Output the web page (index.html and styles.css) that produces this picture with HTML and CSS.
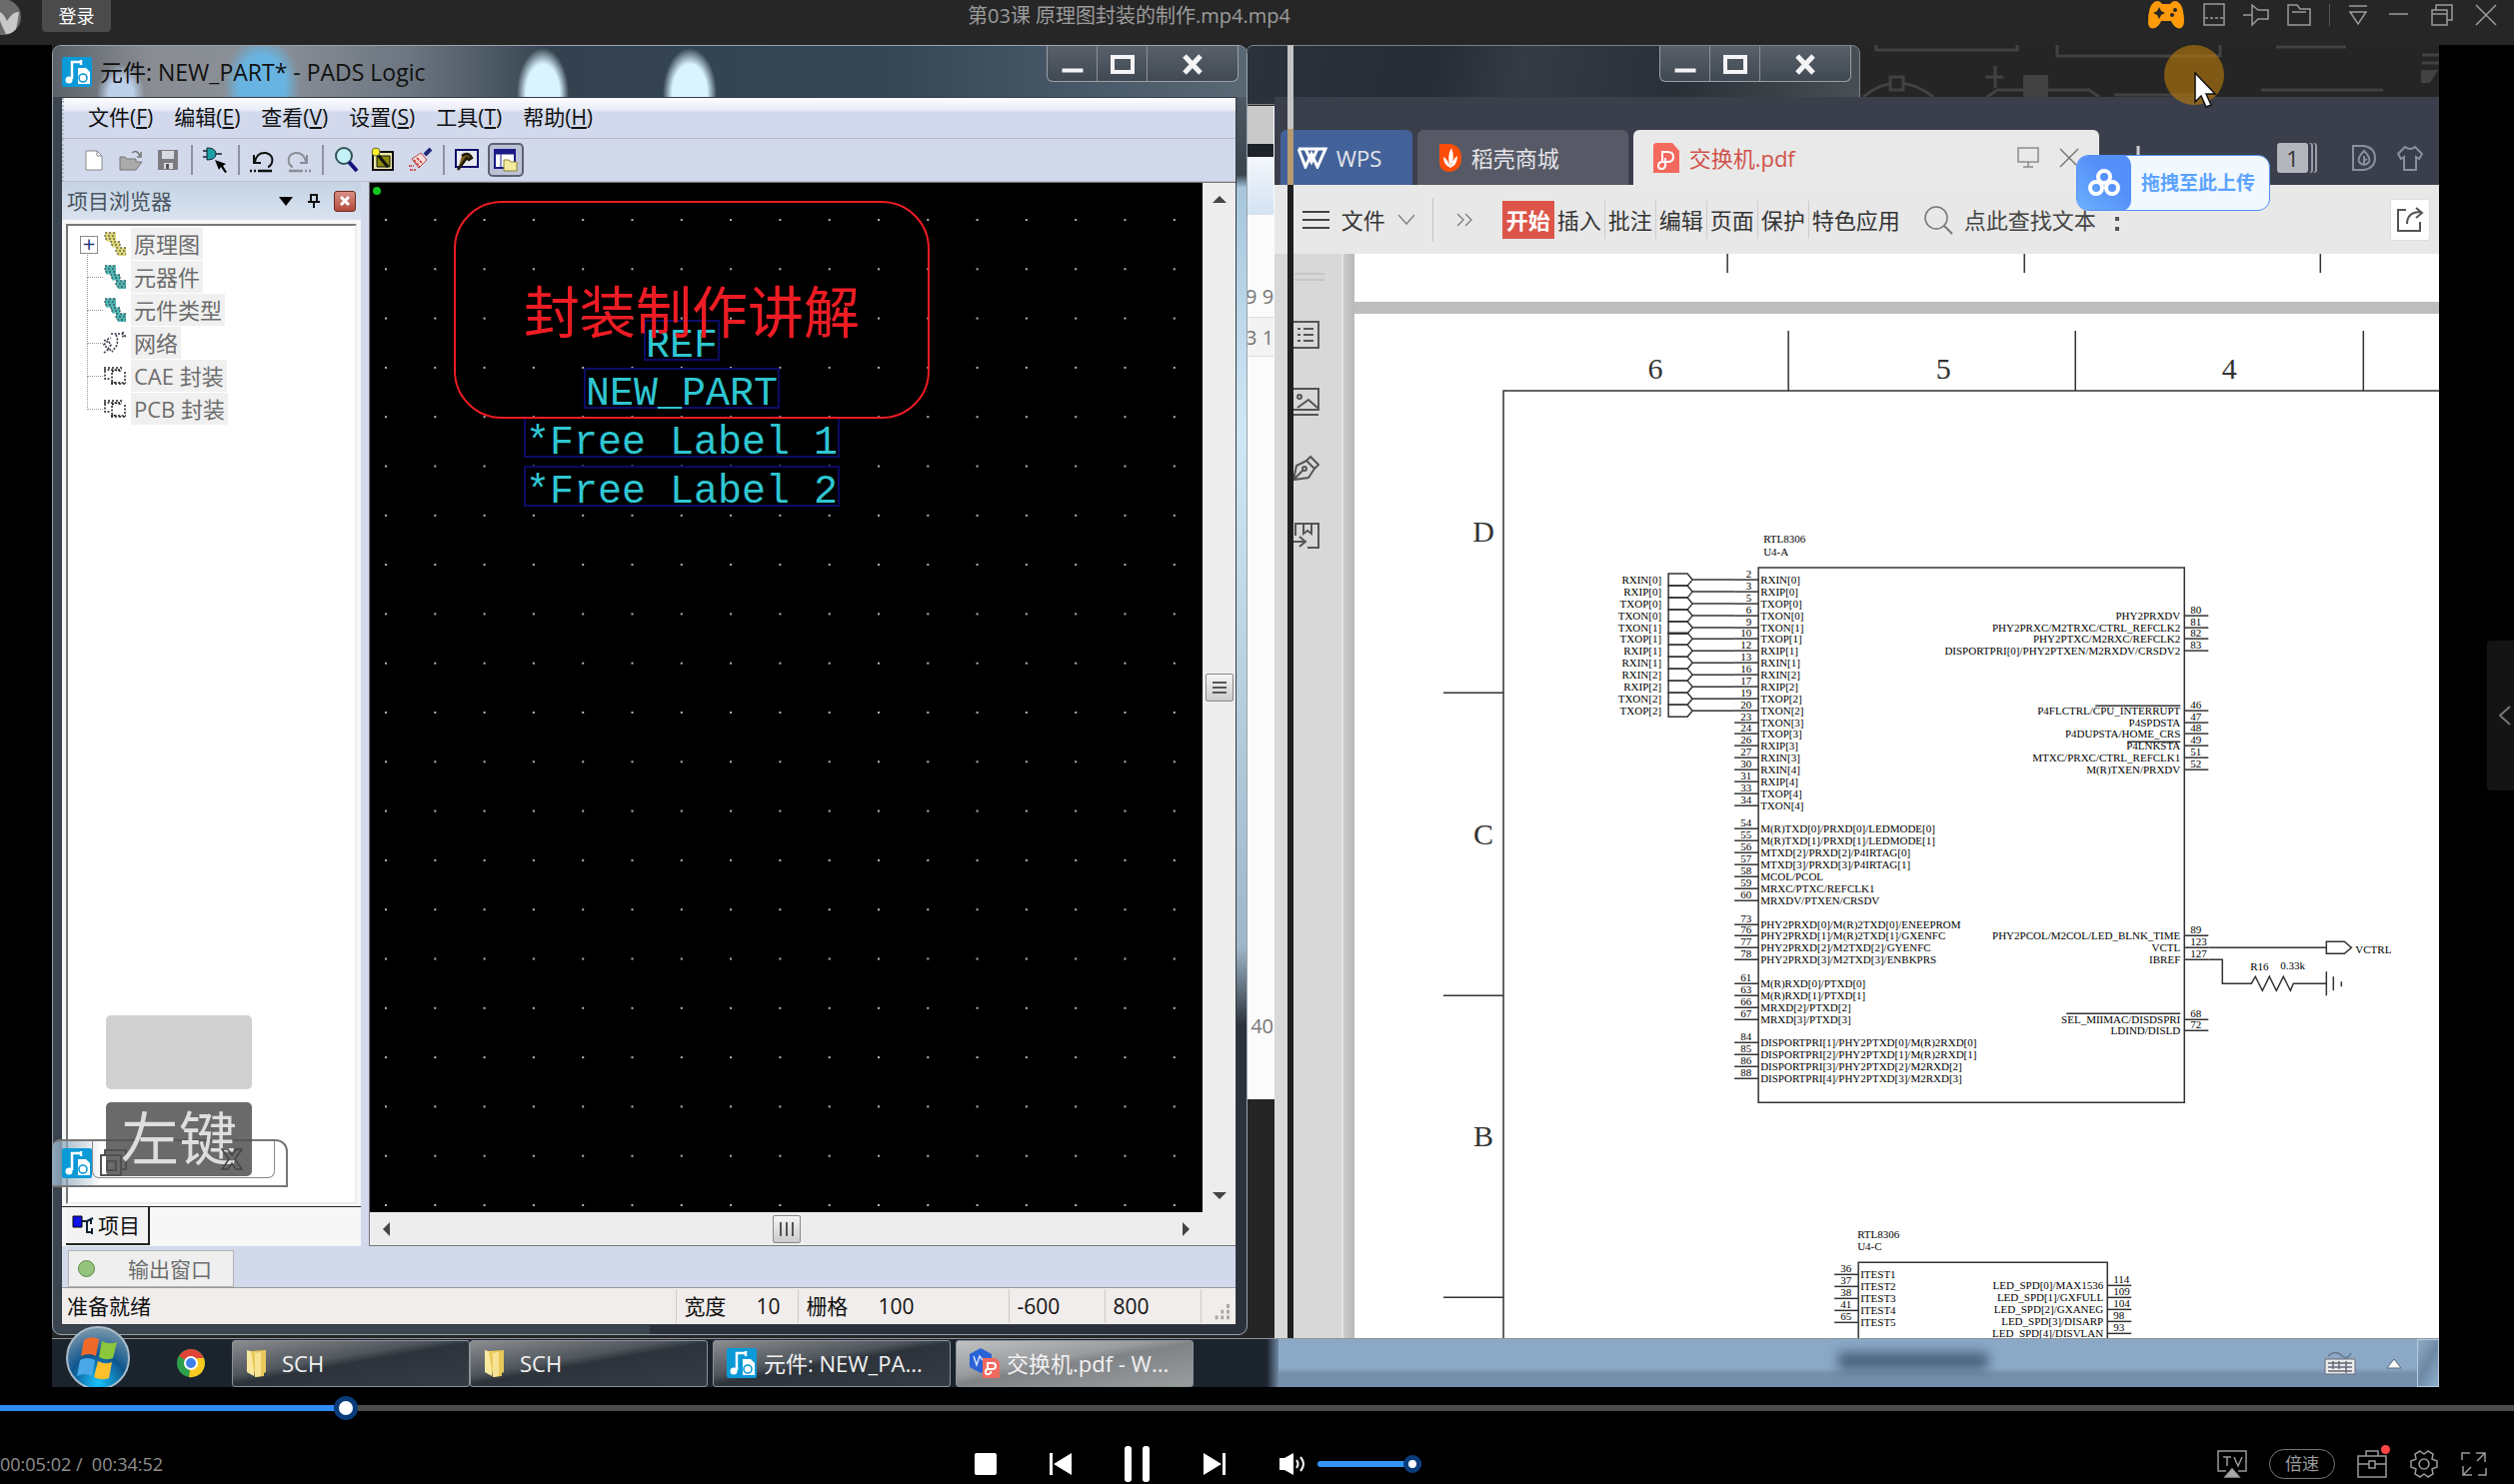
FILE: index.html
```html
<!DOCTYPE html>
<html lang="zh-CN">
<head>
  <meta charset="UTF-8" />
  <meta name="viewport" content="width=device-width, initial-scale=1.0"/>
  <title>第03课 原理图封装的制作.mp4.mp4</title>
  <link rel="stylesheet" href="styles.css">
</head>
<body>
  <!-- Shared icons -->
  <svg class="defs" width="0" height="0" aria-hidden="true">
    <symbol id="pads" viewBox="0 0 30 30">
      <rect width="30" height="30" rx="2" fill="#0b9ad8"/>
      <path d="M10 22V5h9M19 3v5" fill="none" stroke="#fff" stroke-width="2.5"/>
      <circle cx="7" cy="23" r="3.5" fill="#fff"/>
      <path d="M16 11h8l4 4v12H16z" fill="#fff"/>
      <circle cx="21" cy="21" r="4" fill="none" stroke="#0b9ad8" stroke-width="1.6"/>
    </symbol>
    <symbol id="folder" viewBox="0 0 22 30">
      <path d="M1 2l7 2v24l-7-4z" fill="#f9e9a0"/>
      <path d="M5 3l15-1v22l-2 1v3l-9 1z" fill="#e9c95a"/>
      <path d="M9 5l6-1v24l-6 1z" fill="#f7e394"/>
    </symbol>
    <symbol id="parts" viewBox="0 0 24 24">
      <path d="M2 2h11M2 5h11M3 8h10M8 11h9M9 14h8M13 17h10M13 20h10M15 23h8" stroke="currentColor" stroke-width="3"/>
      <path d="M2 1h11M1 4h11M2 7h11M7 10h11M8 13h10M13 16h10M12 19h11M14 22h9" stroke="#333" stroke-width="1" stroke-dasharray="2 2"/>
    </symbol>
    <symbol id="decal" viewBox="0 0 24 24">
      <path d="M2 5V2M6 5V2M10 5V2M14 5V2M18 5V2M1 6h18M2 7v8h5M9 8q5-3 9 0M9 9v8q1 3 4 1M22 8v10M8 19h15M9 19v3M13 19v3M17 19v3M21 19v3" fill="none" stroke="#222" stroke-width="1.5" stroke-dasharray="2 1.5"/>
    </symbol>
    <symbol id="min" viewBox="0 0 24 24"><path d="M1 16h22v5H1z" fill="#f4f4f6" stroke="#444b55"/></symbol>
    <symbol id="max" viewBox="0 0 24 24"><path d="M2 5h20v15H2z" fill="none" stroke="#f4f4f6" stroke-width="4"/></symbol>
    <symbol id="close" viewBox="0 0 24 24"><path d="M4 4l16 17M20 4L4 21" stroke="#f4f4f6" stroke-width="5"/></symbol>
  </svg>

  <!-- Player title bar -->
  <header class="player-bar">
    <svg class="avatar" viewBox="0 0 21 35"><circle cx="3" cy="17" r="18" fill="#6b6b6b"/><path d="M0 12q4 2 7 9 6-10 12-9-1 9-3 17-4 5-10 5Q0 22 0 20z" fill="#c8c8c8"/></svg>
    <button class="login">登录</button>
    <h1>第03课 原理图封装的制作.mp4.mp4</h1>
    <div class="player-tools">
      <button aria-label="游戏"><svg width="38" height="30" viewBox="0 0 38 30"><path d="M7 2Q12-1 15 4h8q3-5 8-2 6 4 6 20-1 8-7 6-4-2-6-7H14q-2 5-6 7-7 2-7-6Q1 6 7 2z" fill="#ff9a0a"/><path d="M12 7l2 4 4 2-4 2-2 4-2-4-4-2 4-2z" fill="#262626"/><circle cx="28" cy="10" r="2" fill="#262626"/><circle cx="25" cy="15" r="2" fill="#262626"/></svg></button>
      <button aria-label="迷你"><svg width="22" height="24" viewBox="0 0 22 24"><path d="M1 1h20v21H1z"/><path d="M2 15h18" stroke-dasharray="3 2"/></svg></button>
      <button aria-label="置顶"><svg width="26" height="24" viewBox="0 0 26 24"><path d="M0 12h9M9 2v20l6-6h10V7H15z"/></svg></button>
      <button aria-label="打开"><svg width="24" height="24" viewBox="0 0 24 24"><path d="M1 2h9l3 4h10v16H1zM5 9h14"/></svg></button>
      <span class="bar-rule"></span>
      <button aria-label="菜单"><svg width="20" height="24" viewBox="0 0 20 24"><path d="M1 3h18M2 9h16l-8 12z"/></svg></button>
      <button class="gap-wide" aria-label="最小化"><svg width="20" height="24" viewBox="0 0 20 24"><path d="M0 11h19"/></svg></button>
      <button class="gap-wide" aria-label="还原"><svg width="24" height="24" viewBox="0 0 24 24"><path d="M2 7h15v15H2zM6 7V2h16v15h-5M2 11h15"/></svg></button>
      <button class="gap-wide" aria-label="关闭"><svg width="22" height="24" viewBox="0 0 22 24"><path d="M1 2l20 20M21 2L1 22"/></svg></button>
    </div>
  </header>

  <main class="stage">
    <div class="desktop">
      <svg class="wallpaper" width="580" height="52" viewBox="0 0 580 52" fill="none" stroke="#424242" stroke-width="3">
        <path d="M17 0v5h141V0M198 0v11h163V0M417 2h70M4 52q34-28 70 0M136 21v22M126 32h18M128 52l10-7h92l10 7M402 45h122M563 10h17M563 18h17M255 50h100"/>
        <path d="M164 30h25v22h-25zM562 25h17l-8 13h-9z" fill="#424242" stroke="none"/><path d="M31 32h13v13H31z" fill="#252525"/>
      </svg>

      <!-- Explorer window lying behind the others -->
      <div class="back-title">
        <div class="win-buttons">
          <button aria-label="最小化"><svg><use href="#min"/></svg></button>
          <button aria-label="最大化"><svg><use href="#max"/></svg></button>
          <button class="wide" aria-label="关闭"><svg><use href="#close"/></svg></button>
        </div>
      </div>
      <div class="back-strip">
        <div class="strip-grey"></div>
        <div class="strip-dark"></div>
        <div class="strip-head"></div>
        <p>9 9</p>
        <p class="alt">3 1</p>
        <p class="low">40</p>
      </div>

      <!-- PADS Logic -->
      <section class="pads">
        <header class="pads-title">
          <svg class="app-icon"><use href="#pads"/></svg>
          <h2>元件: NEW_PART* - PADS Logic</h2>
          <div class="win-buttons">
            <button aria-label="最小化"><svg><use href="#min"/></svg></button>
            <button aria-label="最大化"><svg><use href="#max"/></svg></button>
            <button class="wide" aria-label="关闭"><svg><use href="#close"/></svg></button>
          </div>
        </header>

        <div class="pads-client">
          <nav class="menu">
            <button>文件(<u>F</u>)</button>
            <button>编辑(<u>E</u>)</button>
            <button>查看(<u>V</u>)</button>
            <button>设置(<u>S</u>)</button>
            <button>工具(<u>T</u>)</button>
            <button>帮助(<u>H</u>)</button>
          </nav>

          <div class="toolbar">
            <button aria-label="新建"><svg viewBox="0 0 26 26"><path d="M5 4h11l5 5v14H5z" fill="#fff" stroke="#888"/><path d="M16 4v5h5" fill="none" stroke="#888"/></svg></button>
            <button aria-label="打开"><svg viewBox="0 0 26 26"><path d="M2 22V10h5l2 2h9v3h6l-6 8H2z" fill="#aaa" stroke="#777"/><path d="M14 6q5-4 8 3M23 5v5h-4" fill="none" stroke="#777" stroke-width="1.5"/></svg></button>
            <button aria-label="保存"><svg viewBox="0 0 26 26"><path d="M3 3h20v20H3z" fill="#7c7c80"/><path d="M7 4h12v8H7zM9 16h9v6H9z" fill="#d8dae2"/><path d="M11 17h3v5h-3z" fill="#555"/></svg></button>
            <span class="rule"></span>
            <button aria-label="元件"><svg viewBox="0 0 26 26"><path d="M5 1v12q9 0 9-6T5 1z" fill="#1ca0a6" stroke="#123"/><path d="M1 4h4M1 10h4M14 7h6" stroke="#123" stroke-width="1.6"/><path d="M13 13l11 4-3 2 4 6-2 1-4-6-2 3z"/></svg></button>
            <span class="rule"></span>
            <button aria-label="撤销"><svg viewBox="0 0 26 26"><path d="M5 8v8h7M6 15q2-10 11-9 8 2 6 10-2 4-4 4" fill="none" stroke="#111" stroke-width="2"/><path d="M1 24h22" stroke="#111" stroke-width="2.5" stroke-dasharray="2 2 2 2 14"/></svg></button>
            <button aria-label="重做"><svg viewBox="0 0 26 26"><path d="M21 8v8h-7M20 15Q18 5 9 6 1 8 3 16q2 4 4 4" fill="none" stroke="#8b8f98" stroke-width="2"/><path d="M3 24h22" stroke="#8b8f98" stroke-width="2.5" stroke-dasharray="14 2 2 2 2"/></svg></button>
            <span class="rule"></span>
            <button aria-label="缩放"><svg viewBox="0 0 26 26"><circle cx="11" cy="9" r="8" fill="#c5f2f7" stroke="#355" stroke-width="2"/><path d="M16 15l8 9" stroke="#12127e" stroke-width="4"/></svg></button>
            <button aria-label="板"><svg viewBox="0 0 26 26"><path d="M3 5h20v18H3z" fill="#ece9a8" stroke="#111" stroke-width="2"/><path d="M7 9h13v11H7z" fill="#8b8a0c" stroke="#111"/><path d="M8 8l10 12" stroke="#111" stroke-width="3"/><circle cx="6" cy="5" r="4" fill="#ffee2e" stroke="#663"/></svg></button>
            <button aria-label="刷新"><svg viewBox="0 0 26 26"><path d="M24 2l-6 6" stroke="#23277b" stroke-width="4"/><path d="M5 12l9-6 6 7-8 8z" fill="#f7dcd8" stroke="#b24848"/><path d="M7 13l6 7M10 11l6 6M2 19h5M3 23h6" stroke="#c33" stroke-width="1.5" stroke-dasharray="3 1"/></svg></button>
            <span class="rule"></span>
            <button aria-label="选项"><svg viewBox="0 0 26 26"><path d="M2 3h22v17H2z" fill="#e8eaf2" stroke="#10106c" stroke-width="2"/><path d="M8 9q6-5 10 2l-3 2-2-2-9 12" fill="#7a5c1c" stroke="#221a05" stroke-width="2.5"/></svg></button>
            <button class="pressed" aria-label="项目浏览器"><svg viewBox="0 0 26 26"><path d="M2 3h20v18H2z" fill="#fff" stroke="#1a1a88" stroke-width="2"/><path d="M2 3h20v4H2zM8 7v14" fill="#1a1a88" stroke="#1a1a88"/><path d="M11 13h5l2 2h6v9H11z" fill="#f4ea9e" stroke="#8b8438"/></svg></button>
          </div>

          <div class="pads-body">
            <aside class="browser">
              <header>
                <h3>项目浏览器</h3>
                <button aria-label="菜单"><svg width="16" height="12" viewBox="0 0 16 12"><path d="M1 2h14l-7 9z"/></svg></button>
                <button aria-label="固定"><svg width="12" height="14" viewBox="0 0 12 14"><path d="M3 1h6v7H3zM0 8h12M6 8v6" fill="none" stroke="#111" stroke-width="2"/></svg></button>
                <button class="panel-close" aria-label="关闭"><svg width="10" height="10" viewBox="0 0 10 10"><path d="M1 1l8 8M9 1L1 9" stroke="#fff" stroke-width="3"/></svg></button>
              </header>
              <ul class="tree">
                <li class="root"><svg class="yellow"><use href="#parts"/></svg><span>原理图</span></li>
                <li><svg class="teal"><use href="#parts"/></svg><span>元器件</span></li>
                <li><svg class="teal"><use href="#parts"/></svg><span>元件类型</span></li>
                <li><svg viewBox="0 0 24 24"><path d="M8 3h12l3 3M20 1v6M13 4q3 6 0 12l-4 5M1 10l7-3M1 14l4-4 3 4-3 4zM1 22l5-4 4 3" fill="none" stroke="#334" stroke-width="1.6" stroke-dasharray="2 1.5"/></svg><span>网络</span></li>
                <li><svg><use href="#decal"/></svg><span>CAE 封装</span></li>
                <li><svg><use href="#decal"/></svg><span>PCB 封装</span></li>
              </ul>
              <div class="panel-tabs">
                <button><svg width="24" height="20" viewBox="0 0 24 20"><path d="M1 1h9v11H1z" fill="#1010e8" stroke="#000"/><path d="M10 6h5M15 6v11h4M15 6l6-3M19 3v6M20 13v6" fill="none" stroke="#123" stroke-width="2"/></svg>项目</button>
              </div>
            </aside>

            <div class="work">
              <div class="canvas">
                <svg class="grid-dots">
                  <pattern id="dots" x="15" y="36" width="49.3" height="49.3" patternUnits="userSpaceOnUse"><rect width="2" height="2" fill="#b5b5b5"/></pattern>
                  <rect width="100%" height="100%" fill="url(#dots)"/>
                  <circle cx="7" cy="8" r="4" fill="#10c81e"/>
                </svg>
                <span class="label ref">REF</span>
                <span class="label part">NEW_PART</span>
                <span class="label free1">*Free Label 1</span>
                <span class="label free2">*Free Label 2</span>
                <div class="note">封装制作讲解</div>
              </div>
              <div class="vscroll">
                <svg width="14" height="8" viewBox="0 0 14 8"><path d="M0 8l7-7 7 7z"/></svg>
                <i class="thumb"></i>
                <svg width="14" height="8" viewBox="0 0 14 8"><path d="M0 0l7 7 7-7z"/></svg>
              </div>
              <div class="hscroll">
                <svg width="8" height="14" viewBox="0 0 8 14"><path d="M8 0L1 7l7 7z"/></svg>
                <i class="thumb"></i>
                <svg width="8" height="14" viewBox="0 0 8 14"><path d="M0 0l7 7-7 7z"/></svg>
              </div>
              <div class="corner"></div>
            </div>
          </div>

          <div class="dock"><button><i></i>输出窗口</button></div>
          <footer class="status">
            <span class="ready">准备就绪</span>
            <span class="cell width">宽度<b>10</b></span>
            <span class="cell snap">栅格<b>100</b></span>
            <span class="cell pos">-600</span>
            <span class="cell pos">800</span>
            <svg class="grip cell" viewBox="0 0 35 36"><path d="M26 18h3M20 24h3M26 24h3M14 30h3M20 30h3M26 30h3" stroke="#aaa5a5" stroke-width="4"/></svg>
          </footer>
        </div>
      </section>

      <!-- Key-press overlay and the shrinking window outline -->
      <div class="ghost"><svg class="app-icon"><use href="#pads"/></svg><svg width="28" height="28" viewBox="0 0 28 28" fill="none" stroke="#555" stroke-width="2"><path d="M1 6h20v20H1zM5 6V1h21v19h-5M7 12h9v9H7z"/></svg></div>
      <div class="keys">
        <div class="key faded"></div>
        <div class="key">左键</div>
      </div>
      <svg class="ghost-close" width="24" height="22" viewBox="0 0 24 22"><path d="M2 1h6l4 6 4-6h6l-7 10 7 10h-6l-4-6-4 6H2l7-10z" fill="none" stroke="#444" stroke-width="1.5"/></svg>

      <!-- WPS PDF reader -->
      <section class="wps">
        <nav class="wps-tabs">
          <a href="#" class="tab home"><svg width="30" height="22" viewBox="0 0 30 22"><path d="M1 2h27l-8 18-6-13-6 13L1 2M8 2l6 13 6-13" fill="none" stroke="#fff" stroke-width="3"/></svg>WPS</a>
          <a href="#" class="tab store"><svg width="24" height="30" viewBox="0 0 24 30"><path d="M1 1h11q11 2 11 14T12 29Q1 29 1 19z" fill="#fb4d08"/><path d="M12 25q-7-3-7-11 5 3 7 11zq7-3 7-12-5 3-7 12zq-4-12 1-20 4 9-1 20z" fill="#fff"/></svg>稻壳商城</a>
          <a href="#" class="tab doc"><svg width="26" height="30" viewBox="0 0 26 30"><path d="M2 0h17l7 8v22H0V2z" fill="#f4695d"/><path d="M9 18V9h5q6 0 6 5t-6 5H9q-4 0-4 4 0 3 3 3 4 0 4-4v-7" fill="none" stroke="#fff" stroke-width="2"/></svg>交换机.pdf
            <svg class="present" width="22" height="22" viewBox="0 0 22 22"><path d="M1 1h20v14H1zM11 15v5M6 20h10" fill="none" stroke="#8b8b8b" stroke-width="1.5"/></svg>
            <svg width="20" height="20" viewBox="0 0 20 20"><path d="M1 1l18 18M19 1L1 19" stroke="#777" stroke-width="1.5"/></svg></a>
          <button class="new-tab" aria-label="新标签"><svg width="24" height="24" viewBox="0 0 24 24"><path d="M12 0v24M0 12h24" stroke="#ccc" stroke-width="3"/></svg></button>
          <div class="wps-right">
            <span class="count">1</span>
            <svg width="24" height="26" viewBox="0 0 24 26"><path d="M1 1h11q11 2 11 12T12 25H1zM12 6q-7 7-5 11 5 6 10 0 2-4-5-11zM12 11v9M12 16l3-2" fill="none" stroke="#8b8f9c" stroke-width="2"/></svg>
            <svg width="26" height="26" viewBox="0 0 26 26"><path d="M8 2q5 4 10 0l7 7-3 5-3-2v13H7V12l-3 2-3-5z" fill="none" stroke="#8b8f9c" stroke-width="2"/></svg>
          </div>
        </nav>

        <div class="ribbon">
          <button class="file"><svg width="27" height="20" viewBox="0 0 27 20"><path d="M0 2h27M0 10h27M0 18h27" stroke="#444" stroke-width="2"/></svg>文件<svg width="18" height="12" viewBox="0 0 18 12"><path d="M1 1l8 9 8-9" fill="none" stroke="#888" stroke-width="1.5"/></svg></button>
          <button class="more" aria-label="更多"><svg width="17" height="14" viewBox="0 0 17 14"><path d="M1 1l6 6-6 6M9 1l6 6-6 6" fill="none" stroke="#888" stroke-width="1.5"/></svg></button>
          <div class="ribbon-tabs">
            <button class="on">开始</button><button>插入</button><button>批注</button><button>编辑</button><button>页面</button><button>保护</button><button>特色应用</button>
          </div>
          <label class="find"><svg width="30" height="30" viewBox="0 0 30 30"><circle cx="13" cy="13" r="11" fill="none" stroke="#777" stroke-width="1.5"/><path d="M21 21l8 8" stroke="#777" stroke-width="2"/></svg><input type="text" aria-label="查找" placeholder="点此查找文本"></label>
          <svg width="6" height="26" viewBox="0 0 6 26"><path d="M1 2h4M1 12h4M1 22h4" stroke="#555" stroke-width="4"/></svg>
          <button class="share" aria-label="分享"><svg width="28" height="26" viewBox="0 0 28 26"><path d="M10 3H2v21h22v-9M11 17q0-12 14-12M20 1l6 5-6 5" fill="none" stroke="#555" stroke-width="2"/></svg></button>
        </div>

        <div class="reader">
          <aside class="side">
            <svg class="handle" width="30" height="10" viewBox="0 0 30 10"><path d="M0 2h30M0 8h30" stroke="#b5b5b5"/></svg>
            <button aria-label="目录"><svg viewBox="0 0 28 28"><path d="M1 1h26v26H1zM6 8h3M12 8h10M6 14h3M12 14h10M6 20h3M12 20h10"/></svg></button>
            <button aria-label="图片"><svg viewBox="0 0 28 28"><path d="M1 1h26v21H1zM6 20l11-8 9 8M1 27h26"/><circle cx="8" cy="9" r="2"/></svg></button>
            <button aria-label="签名"><svg viewBox="0 0 28 28"><path d="M2 25l3-14 10-5 8 8-6 9zM2 25l10-10M15 6l4-4 8 8-4 4"/><circle cx="13" cy="14" r="2"/></svg></button>
            <button aria-label="导出"><svg viewBox="0 0 28 28"><path d="M4 14V2h23v24H16M1 20h12M8 15l6 5-6 5M12 2v10l4-3 4 3V2"/></svg></button>
          </aside>
          <svg class="page" id="page" viewBox="0 0 1085 1085" preserveAspectRatio="xMinYMin slice">
            <rect class="gap" y="48" width="1400" height="12"/>
            <path class="frame" d="M373 0v19M670 0v19M966 0v19M149 1200V137h1300M434 77v60M721 77v60M1009 77v60M89 439h60M89 742h60M89 1044h60"/>
            <g class="zone">
              <text x="301" y="125">6</text><text x="589" y="125">5</text><text x="875" y="125">4</text>
              <text x="129" y="288">D</text><text x="129" y="591">C</text><text x="129" y="893">B</text>
            </g>
          </svg>
        </div>
      </section>
      <div class="split-line"></div>

      <footer class="taskbar">
        <button class="start" aria-label="开始"><svg width="66" height="66" viewBox="0 0 66 66">
          <defs><radialGradient id="orb" cx=".5" cy=".9" r=".9"><stop offset="0" stop-color="#18c4ff"/><stop offset=".5" stop-color="#0f568f"/><stop offset="1" stop-color="#7d99ab"/></radialGradient></defs>
          <circle cx="33" cy="33" r="31" fill="url(#orb)" stroke="#a8bccb" stroke-width="2"/>
          <path d="M19 15q7-5 15-1l-3 17q-7-4-15 0z" fill="#ef6a2a"/><path d="M37 16q7 4 15 1l-4 16q-7 3-14-1z" fill="#8cc63c"/>
          <path d="M15 35q7-4 15 0l-3 16q-7-4-15 0z" fill="#4aa8e8"/><path d="M33 36q7 4 14 1l-3 16q-8 3-15-1z" fill="#fcc02c"/>
        </svg></button>
        <button class="chrome" aria-label="Chrome"><svg width="30" height="30" viewBox="0 0 30 30"><circle cx="15" cy="15" r="14" fill="#2da04c"/><path d="M15 15L3 8Q8 1 15 1t12 7l1 3H15z" fill="#e04436"/><path d="M15 15l6-5h7q3 9-4 16-5 4-11 3z" fill="#fbc91f"/><circle cx="15" cy="15" r="7" fill="#fff"/><circle cx="15" cy="15" r="5" fill="#3f7fea"/></svg></button>
        <button class="task joined"><svg class="dir"><use href="#folder"/></svg>SCH</button>
        <button class="task"><svg class="dir"><use href="#folder"/></svg>SCH</button>
        <button class="task app"><svg class="app-icon"><use href="#pads"/></svg>元件: NEW_PA...</button>
        <button class="task app active"><svg class="app-icon" viewBox="0 0 30 30"><path d="M11 0l11 6v13l-11 6L0 19V6z" fill="#2b62d8"/><path d="M4 8l3 9 3-9 3 4" fill="none" stroke="#cfe0ff" stroke-width="1.5"/><path d="M13 10h13l4 4v16H13z" fill="#f0695f"/><path d="M18 21v-6h5q3 0 3 3t-3 3h-5q-2 0-2 3t3 2 2-3" fill="none" stroke="#fff" stroke-width="2"/></svg>交换机.pdf - W...</button>
        <div class="tray">
          <span class="smudge"></span>
          <svg width="32" height="24" viewBox="0 0 32 24"><path d="M4 5q8-7 14 0 6 4 9-3" fill="none" stroke="#667888" stroke-width="1.5"/><path d="M1 8h30v15H1z" fill="#e8eaec" stroke="#667"/><path d="M4 12h24M4 16h24M4 20h24M9 10v8M15 10v8M22 10v12" stroke="#667" stroke-width="1.5"/></svg>
          <svg width="16" height="12" viewBox="0 0 16 12"><path d="M1 11l7-9 7 9z" fill="#fff" stroke="#567"/></svg>
          <i class="peek"></i>
        </div>
      </footer>

      <div class="spot"></div>
      <svg class="pointer" width="24" height="36" viewBox="0 0 24 36"><path d="M1 1v29l6-6 5 11 5-2-5-11h9z" fill="#fff" stroke="#111" stroke-width="1.5"/></svg>
      <button class="upload"><span><svg width="32" height="28" viewBox="0 0 32 28" fill="none" stroke="#fff" stroke-width="4"><circle cx="16" cy="8" r="6"/><circle cx="8" cy="19" r="6"/><circle cx="24" cy="19" r="6"/></svg></span>拖拽至此上传</button>
    </div>
    <button class="drawer" aria-label="列表"><svg width="12" height="20" viewBox="0 0 12 20"><path d="M11 1L1 10l10 9" fill="none" stroke="#777" stroke-width="2"/></svg></button>
  </main>

  <!-- Player controls -->
  <footer class="controls">
    <input class="seek" type="range" min="0" max="1000" value="134" aria-label="进度">
    <div class="control-row">
      <div class="time">00:05:02 /&nbsp; 00:34:52</div>
      <div class="play">
        <button aria-label="停止"><svg width="22" height="22" viewBox="0 0 22 22"><rect width="22" height="22" rx="2"/></svg></button>
        <button aria-label="上一个"><svg width="22" height="22" viewBox="0 0 22 22"><path d="M0 0h3v22H0zM22 0v22L4 11z"/></svg></button>
        <button aria-label="暂停"><svg width="26" height="36" viewBox="0 0 26 36"><rect width="7" height="36" rx="3"/><rect x="18" width="7" height="36" rx="3"/></svg></button>
        <button aria-label="下一个"><svg width="22" height="22" viewBox="0 0 22 22"><path d="M19 0h3v22h-3zM0 0v22l18-11z"/></svg></button>
        <button aria-label="音量"><svg width="28" height="22" viewBox="0 0 28 22"><path d="M1 5h5l9-5v22l-9-5H1z"/><path d="M18 7q3 4 0 8M22 4q6 7 0 14" fill="none" stroke="#fff" stroke-width="2"/></svg></button>
        <input class="volume" type="range" min="0" max="100" value="100" aria-label="音量">
      </div>
      <div class="extras">
        <button aria-label="投屏"><svg width="30" height="28" viewBox="0 0 30 28"><path d="M9 21H1V1h28v20h-8M6 7h8M10 7v9M17 7l4 9 4-9"/><path d="M8 27l7-8 7 8z" fill="#aaa"/></svg></button>
        <button class="speed">倍速</button>
        <button class="box" aria-label="工具箱"><svg width="30" height="28" viewBox="0 0 30 28"><path d="M1 6h28v21H1zM9 6V1h12v5M1 14h11M18 14h11M12 11h6v7h-6z"/></svg></button>
        <button aria-label="设置"><svg width="30" height="28" viewBox="0 0 30 28"><path d="M11 1l4 3 4-3 5 3-1 5 5 2v6l-5 2 1 5-5 3-4-3-4 3-5-3 1-5-5-2v-6l5-2-1-5z"/><circle cx="15" cy="14" r="5"/></svg></button>
        <button aria-label="全屏"><svg width="26" height="26" viewBox="0 0 26 26"><path d="M1 9V2h8M25 17v7h-8M15 2h9v9M24 2l-8 8M11 24H2v-9M2 24l8-8"/></svg></button>
      </div>
    </div>
  </footer>

  <script src="script.js"></script>
</body>
</html>
```
FILE: styles.css
```css
* {
  box-sizing: border-box;
}

body {
  margin: 0;
  height: 100vh;
  display: flex;
  flex-direction: column;
  overflow: hidden;
  background: #000;
  color: #111;
  font-family: "Open Sans", "Noto Sans CJK SC", sans-serif;
  font-size: 21px;
  line-height: 28px;
}

button {
  margin: 0;
  padding: 0;
  border: 0;
  background: none;
  color: inherit;
  font: inherit;
  display: flex;
  align-items: center;
  white-space: nowrap;
  cursor: pointer;
}

a {
  color: inherit;
  text-decoration: none;
}

h1, h2, h3, p, ul {
  margin: 0;
  padding: 0;
  font-weight: normal;
  font-size: inherit;
  list-style: none;
}

svg {
  flex: none;
}

.defs {
  position: absolute;
}

.app-icon {
  width: 30px;
  height: 30px;
}

/* player title bar */
.player-bar {
  flex: none;
  height: 45px;
  display: grid;
  grid-template-columns: 1fr auto 1fr;
  grid-template-areas: "left title tools";
  align-items: start;
  background: #262626;
  color: #9b9b9b;
  font-size: 18px;
}

.avatar {
  grid-area: left;
  width: 21px;
  height: 35px;
}

.login {
  grid-area: left;
  margin-left: 42px;
  justify-self: start;
  width: 69px;
  height: 32px;
  justify-content: center;
  border-radius: 0 0 4px 4px;
  background: #4b4b4b;
  color: #fff;
}

.player-bar h1 {
  grid-area: title;
  margin-right: 256px;
  font-size: 20px;
  line-height: 32px;
}

.player-tools {
  grid-area: tools;
  justify-self: end;
  height: 30px;
  padding-right: 17px;
  display: flex;
  align-items: center;
  gap: 18px;
}

.player-tools svg {
  fill: none;
  stroke: #9b9b9b;
  stroke-width: 1.5;
}

.player-tools button:first-child svg {
  stroke: none;
}

.player-tools .gap-wide {
  margin-left: 3px;
}

.bar-rule {
  width: 1px;
  height: 22px;
  background: #555;
}

/* recorded desktop */
.stage {
  flex: 1;
  min-height: 0;
  position: relative;
  display: flex;
  padding: 0 75px 0 52px;
}

.desktop {
  flex: 1;
  position: relative;
  overflow: hidden;
  display: flex;
  flex-direction: column;
  justify-content: flex-end;
  background: #252525;
}

.wallpaper {
  position: absolute;
  top: 0;
  right: 0;
}

.back-title {
  position: absolute;
  top: 0;
  left: 50%;
  width: 615px;
  height: 60px;
  border: 1px solid #7b8289;
  border-radius: 8px 8px 0 0;
  background: linear-gradient(100deg, #2a323c, #262c34 30%, #353b43 45%, #2a3037 70%, #4a4f56);
}

.back-strip {
  position: absolute;
  top: 61px;
  left: 50%;
  width: 30px;
  height: 994px;
  padding-right: 2px;
  background: #fbfbfb;
  color: #777;
  font-size: 20px;
}

.strip-grey {
  height: 38px;
  background: #c9c9c9;
}

.strip-dark {
  height: 13px;
  background: #1e2329;
}

.strip-head {
  height: 58px;
  margin-bottom: 62px;
  background: linear-gradient(#f3f7fb, #d3e2f3);
}

.back-strip p {
  height: 40px;
  line-height: 40px;
  white-space: nowrap;
  text-align: right;
}

.back-strip .alt {
  border: solid #ddd;
  border-width: 1px 0;
  background: #f3f3f3;
}

.back-strip .low {
  margin-top: 650px;
}

.win-buttons {
  position: absolute;
  top: 0;
  right: 8px;
  display: flex;
  height: 36px;
  border: 1px solid #9aa0a7;
  border-top: 0;
  border-radius: 0 0 6px 6px;
  background: linear-gradient(#59606a, #404953);
}

.win-buttons button {
  width: 50px;
  justify-content: center;
  border-right: 1px solid #8a9098;
}

.win-buttons .wide {
  width: 90px;
  border: 0;
}

.win-buttons svg {
  width: 24px;
  height: 24px;
}

/* PADS Logic */
.pads {
  position: absolute;
  top: 0;
  bottom: 52px;
  left: 0;
  width: 50.1%;
  padding: 0 10px 9px 8px;
  display: flex;
  flex-direction: column;
  border: 1px solid #9aa4ae;
  border-radius: 9px;
  background:
    linear-gradient(90deg, #39444f 50%, transparent 50%),
    linear-gradient(#5b6672, #39444f 10%, #a7c6dc 11%, #cfe8f6 30%, #9fb6c8 70%, #2c333d 76%, #2b313b);
}

.pads-title {
  flex: none;
  height: 51px;
  margin: 0 -10px 0 -8px;
  padding: 0 9px;
  display: flex;
  align-items: center;
  gap: 8px;
  position: relative;
  border-radius: 8px 8px 0 0;
  background:
    radial-gradient(ellipse 26px 46px at 490px 48px, #d9f4ff 65%, transparent),
    radial-gradient(ellipse 27px 46px at 637px 48px, #d9f4ff 65%, transparent),
    radial-gradient(ellipse 38px 50px at 209px 40px, #67b4e2 60%, transparent),
    radial-gradient(ellipse 24px 30px at 68px 48px, #bcd0ea 50%, transparent),
    linear-gradient(90deg, #5c6269, #898d93 8%, #8b9098 18%, #6b7580 30%, #34424f 42%, #354656 70%, #5a6875);
}

.pads-title h2 {
  font-size: 23px;
}

.pads-client {
  flex: 1;
  min-height: 0;
  display: flex;
  flex-direction: column;
  border: 1px solid #333b45;
  background: #d2d9eb;
}

.menu {
  flex: none;
  height: 41px;
  padding: 0 0 3px 24px;
  display: flex;
  gap: 21px;
  border-bottom: 1px solid #b4bacb;
  background: linear-gradient(#fdfdff, #e9ecf7 30%, #d2d9ec 36%);
}

.menu, .toolbar {
  border-left: 2px dotted #b0b6c6;
}

.toolbar {
  flex: none;
  height: 43px;
  padding-left: 14px;
  display: flex;
  align-items: center;
  gap: 5px;
  border-bottom: 1px solid #b9bfce;
}

.toolbar button {
  width: 32px;
  height: 34px;
  justify-content: center;
}

.toolbar svg {
  width: 26px;
  height: 26px;
}

.toolbar .rule {
  width: 2px;
  height: 30px;
  margin: 0 1px 0 2px;
  background: #8d93a3;
}

.toolbar .pressed {
  width: 36px;
  border: 2px solid #5d6272;
  border-radius: 5px;
  background: #bcc2d6;
}

.pads-body {
  flex: 1;
  min-height: 0;
  display: flex;
  gap: 8px;
}

.browser {
  width: 299px;
  display: flex;
  flex-direction: column;
  background: #f7f7f8;
}

.browser header {
  height: 38px;
  padding: 0 5px;
  display: flex;
  align-items: center;
  gap: 14px;
  background: linear-gradient(#c5d3e4, #d9e3ef);
  color: #4b5563;
}

.browser h3 {
  margin-right: auto;
}

.panel-close {
  width: 22px;
  height: 21px;
  justify-content: center;
  border: 1px solid #6b2a20;
  border-radius: 3px;
  background: linear-gradient(#d98f85, #b14a3c);
}

.tree {
  flex: 1;
  margin: 4px 4px 0;
  padding: 1px 0 0 19px;
  border: 2px solid #777;
  border-color: #777 #eee #eee #777;
  background: #fff;
  color: #6d6d6d;
  font-size: 22px;
}

.tree li {
  height: 33px;
  display: flex;
  align-items: center;
  position: relative;
  padding-left: 16px;
}

.tree li::before {
  content: "";
  position: absolute;
  left: 0;
  top: -16px;
  width: 15px;
  height: 33px;
  border: 1px dotted #999;
  border-width: 0 0 1px 1px;
}

.tree .root::before {
  content: "+";
  left: -7px;
  top: 9px;
  width: 16px;
  height: 16px;
  border: 1px solid #8a8a8a;
  background: #fff;
  color: #22387c;
  line-height: 13px;
  text-align: center;
  z-index: 1;
}

.tree svg {
  width: 24px;
  height: 24px;
}

.tree span {
  margin-left: 4px;
  padding: 0 3px;
  line-height: 32px;
  background: #f0f0f0;
}

.yellow {
  color: #ded878;
}

.teal {
  color: #4fb6b6;
}

.panel-tabs {
  height: 40px;
  margin-top: 2px;
  border-top: 1px solid #222;
}

.panel-tabs button {
  width: 84px;
  height: 38px;
  margin-left: 4px;
  padding-left: 6px;
  gap: 2px;
  border: solid #222;
  border-width: 0 2px 2px 0;
  background: #f3f3f3;
}

.work {
  flex: 1;
  display: grid;
  grid-template: 1fr 33px / 1fr 33px;
  border: 1px solid #777;
  border-right: 0;
  background: #ededee;
}

.canvas {
  position: relative;
  overflow: hidden;
  background: #000;
}

.grid-dots {
  display: block;
  width: 100%;
  height: 100%;
}

.label {
  position: absolute;
  height: 41px;
  border: 2px solid #0c0c66;
  color: #2fc6d2;
  font-family: "Liberation Mono", monospace;
  font-size: 40px;
  line-height: 50px;
  white-space: pre;
}

.ref {
  left: 274px;
  top: 137px;
}

.part {
  left: 214px;
  top: 185px;
}

.free1 {
  left: 154px;
  top: 234px;
}

.free2 {
  left: 154px;
  top: 283px;
}

.note {
  position: absolute;
  left: 84px;
  top: 18px;
  width: 476px;
  height: 218px;
  border: 2px solid #ed1c24;
  border-radius: 48px;
  color: #ed1c24;
  font-size: 56px;
  line-height: 216px;
  text-align: center;
}

.vscroll, .hscroll {
  display: flex;
  align-items: center;
  justify-content: space-between;
  fill: #444;
}

.vscroll {
  flex-direction: column;
  padding: 12px 0;
}

.hscroll {
  padding: 0 12px;
}

.thumb {
  width: 28px;
  height: 28px;
  border: 1px solid #8a8a8a;
  border-radius: 2px;
  background: repeating-linear-gradient(90deg, #555 0 2px, transparent 2px 6px) center / 14px 14px no-repeat, linear-gradient(#f5f5f5, #ccc);
}

.vscroll .thumb {
  margin-bottom: 20px;
  background: repeating-linear-gradient(#555 0 2px, transparent 2px 5px) center / 14px 12px no-repeat, linear-gradient(#f5f5f5, #ccc);
}

.dock {
  flex: none;
  height: 41px;
  padding: 4px 6px 0;
}

.dock button {
  width: 166px;
  height: 37px;
  padding-left: 9px;
  gap: 33px;
  border: 1px solid #b3b3b3;
  background: #efefef;
  color: #6d6d6d;
}

.dock i {
  width: 17px;
  height: 17px;
  border: 1px solid #5d8a48;
  border-radius: 50%;
  background: #95c47d;
}

.status {
  flex: none;
  height: 37px;
  display: flex;
  align-items: center;
  border-top: 1px solid #999;
  background: #f1edec;
}

.ready {
  margin-right: auto;
  padding-left: 5px;
}

.cell {
  height: 34px;
  padding-left: 7px;
  line-height: 34px;
  border-left: 1px solid #d0cccb;
}

.status b {
  margin-left: 30px;
  font-weight: normal;
}

.width {
  width: 122px;
}

.snap {
  width: 211px;
}

.pos {
  width: 96px;
}

.grip {
  width: 35px;
  padding: 0;
}

/* key overlay */
.keys {
  position: absolute;
  left: 54px;
  bottom: 211px;
  display: grid;
  gap: 13px;
}

.key {
  width: 146px;
  height: 74px;
  border-radius: 5px;
  background: rgba(80, 80, 80, 0.85);
  color: #dedede;
  font-size: 58px;
  line-height: 72px;
  text-align: center;
}

.faded {
  background: #d0d0d0;
}

.ghost {
  position: absolute;
  left: 0;
  bottom: 200px;
  width: 236px;
  height: 48px;
  padding-left: 10px;
  display: flex;
  align-items: center;
  gap: 8px;
  border: 2px solid #777;
  border-left: 0;
  border-radius: 8px 12px 0 0;
  background: linear-gradient(90deg, #8fa9bd, rgba(255, 255, 255, 0) 50px);
}

.ghost::after {
  content: "";
  flex: 1;
  align-self: start;
  height: 36px;
  margin: 0 11px 0 -44px;
  border: 1px solid #888;
  border-top: 0;
  border-radius: 0 0 7px 7px;
}

.ghost-close {
  position: absolute;
  left: 168px;
  bottom: 217px;
}

/* WPS */
.wps {
  position: absolute;
  top: 52px;
  right: 0;
  bottom: 49px;
  left: 51.2%;
  display: flex;
  flex-direction: column;
  background: #e8e8e8;
}

.wps-tabs {
  flex: none;
  height: 88px;
  padding: 33px 16px 0 6px;
  display: flex;
  gap: 5px;
  background: #3b3f4c;
  color: #e4e4e8;
  font-size: 22px;
}

.tab {
  display: flex;
  align-items: center;
  border-radius: 6px 6px 0 0;
}

.home {
  width: 132px;
  padding-left: 17px;
  gap: 9px;
  background: #43629a;
}

.store {
  width: 211px;
  padding-left: 21px;
  gap: 9px;
  background: #575a66;
}

.doc {
  width: 466px;
  padding: 0 20px;
  gap: 10px;
  background: #e9e9e9;
  color: #d0524a;
}

.present {
  margin: 0 10px 0 auto;
}

.new-tab {
  margin-left: 22px;
}

.wps-right {
  margin-left: auto;
  display: flex;
  align-items: center;
  gap: 21px;
}

.count {
  width: 31px;
  height: 30px;
  margin-right: 23px;
  border-radius: 3px;
  background: #b4b6bd;
  box-shadow: 3px 0 #3b3f4c, 5px 0 #9a9da6, 7px 0 #3b3f4c, 9px 0 #9a9da6;
  color: #333;
  line-height: 30px;
  text-align: center;
}

.ribbon {
  flex: none;
  height: 69px;
  padding: 0 9px 0 28px;
  display: flex;
  align-items: center;
  color: #333;
  font-size: 22px;
}

.file {
  height: 44px;
  gap: 12px;
  padding-right: 17px;
  border-right: 1px solid #c4c4c4;
}

.more {
  margin: 0 29px 0 23px;
}

.ribbon-tabs {
  display: flex;
}

.ribbon-tabs button {
  height: 38px;
  padding: 0 3px;
  border-left: 1px solid #ccc;
}

.ribbon-tabs .on {
  padding: 0 4px;
  border: 0;
  background: #dc5548;
  color: #fff;
  font-weight: bold;
}

.ribbon-tabs .on + button {
  border: 0;
}

.find {
  margin-left: 20px;
  display: flex;
  align-items: center;
  gap: 11px;
}

.find input {
  width: 150px;
  padding: 0;
  border: 0;
  background: none;
  font: inherit;
}

.find input::placeholder {
  color: #444;
}

.share {
  width: 40px;
  height: 42px;
  margin-left: auto;
  justify-content: center;
  border: 1px solid #ddd;
  border-radius: 3px;
  background: #fff;
}

.reader {
  flex: 1;
  min-height: 0;
  display: flex;
  background: #d7d7d7;
}

.side {
  width: 80px;
  padding: 18px 0 0 17px;
  display: flex;
  flex-direction: column;
  gap: 39px;
  background: linear-gradient(90deg, #d8d8d8 67px, #e4e4e4 67px 69px, #ccc 69px, #b8b8b8);
}

.side .handle {
  margin-left: 3px;
}

.side button svg {
  width: 28px;
  height: 28px;
  fill: none;
  stroke: #555;
  stroke-width: 2;
}

.side button {
  height: 28px;
}

.page {
  flex: 1;
  min-width: 0;
  height: 100%;
  background: #fff;
  font-family: "Liberation Serif", serif;
  font-size: 11px;
}

.gap {
  fill: #bdbdbd;
}

.frame, .wire {
  fill: none;
  stroke: #333;
  stroke-width: 1.5;
}

.zone {
  fill: #333;
  font-size: 30px;
  text-anchor: middle;
}

.end {
  text-anchor: end;
}

.split-line {
  position: absolute;
  top: 0;
  bottom: 49px;
  left: 51.76%;
  width: 6px;
  background: linear-gradient(#c4c4c4 84px, #b89a70 84px 140px, #1c1e20 140px);
}

/* taskbar */
.taskbar {
  height: 49px;
  display: flex;
  align-items: center;
  position: relative;
  border-top: 1px solid #8d949c;
  background: linear-gradient(90deg, #1b232d 1215px, #7690ab 1228px);
  color: #f2f2f2;
  font-size: 22px;
}

.start {
  width: 66px;
  height: 66px;
  margin: -10px 0 0 13px;
}

.chrome {
  margin: 0 26px 0 45px;
}

.task {
  width: 238px;
  height: 47px;
  padding-left: 13px;
  gap: 14px;
  border: 1px solid #8b9197;
  border-radius: 3px;
  margin-right: 5px;
  background: linear-gradient(170deg, #8a8d90, #50565c 40%, #2c333b 50%, #353c44);
}

.joined {
  margin-right: 0;
}

.app {
  gap: 7px;
}

.active {
  background: linear-gradient(170deg, #bfc1c3, #999b9d 40%, #808386 50%, #9a9d9f);
}

.dir {
  width: 22px;
  height: 30px;
}

.tray {
  flex: 1;
  align-self: stretch;
  margin-left: 80px;
  display: flex;
  align-items: center;
  gap: 30px;
  background: linear-gradient(#8ba9c7 60%, #7690ab 72%);
}

.smudge {
  width: 150px;
  height: 18px;
  margin: -4px auto 0 560px;
  background: #4a647f;
  filter: blur(6px);
}

.peek {
  width: 22px;
  height: 48px;
  margin-left: -15px;
  border: 1px solid #b5cbe0;
  background: linear-gradient(120deg, #93abc4, #6d88a5 50%, #8fb0cd);
}

/* pointer highlight and drop target */
.spot {
  position: absolute;
  top: 0;
  left: 2113px;
  width: 60px;
  height: 60px;
  border-radius: 50%;
  background: rgba(190, 125, 10, 0.6);
}

.pointer {
  position: absolute;
  top: 27px;
  left: 2143px;
}

.upload {
  position: absolute;
  top: 110px;
  left: 2025px;
  width: 194px;
  height: 56px;
  gap: 10px;
  border: 1px solid #4f8ff7;
  border-radius: 12px;
  overflow: hidden;
  background: #f1f9ff;
  color: #5ba3ff;
  font-size: 19px;
  font-weight: bold;
}

.upload span {
  width: 54px;
  height: 56px;
  display: flex;
  align-items: center;
  justify-content: center;
  border-radius: 0 10px 10px 0;
  background: linear-gradient(45deg, #6cb0fc, #5590fa 60%);
}

.drawer {
  position: absolute;
  top: 596px;
  right: 0;
  width: 27px;
  height: 150px;
  padding-left: 12px;
  border-radius: 4px 0 0 4px;
  background: #141414;
}

/* player controls */
.controls {
  flex: none;
  height: 97px;
  display: flex;
  flex-direction: column;
}

input[type="range"] {
  appearance: none;
  -webkit-appearance: none;
  margin: 0;
  background: none;
}

.seek {
  width: 100%;
  height: 42px;
}

.seek::-webkit-slider-runnable-track {
  height: 6px;
  background: linear-gradient(90deg, #2f8cf8 14%, #4c4c4c 14%);
}

.seek::-webkit-slider-thumb {
  -webkit-appearance: none;
  width: 24px;
  height: 24px;
  margin-top: -9px;
  border: 5px solid #0a3c7c;
  border-radius: 50%;
  background: #fff;
}

.control-row {
  flex: 1;
  display: grid;
  grid-template-columns: 975px 1fr auto;
  align-items: center;
  padding: 14px 27px 0 0;
}

.time {
  color: #8f8f8f;
  font-size: 18px;
}

.play {
  display: flex;
  align-items: center;
  gap: 53px;
  fill: #fff;
}

.play .volume {
  width: 104px;
  height: 20px;
  margin-left: -42px;
}

.volume::-webkit-slider-runnable-track {
  height: 6px;
  border-radius: 3px;
  background: #3296fa;
}

.volume::-webkit-slider-thumb {
  -webkit-appearance: none;
  width: 18px;
  height: 18px;
  margin-top: -6px;
  border: 5px solid #0a3c7c;
  border-radius: 50%;
  background: #fff;
}

.extras {
  display: flex;
  align-items: center;
  gap: 22px;
  color: #9b9b9b;
  font-size: 17px;
}

.extras svg {
  fill: none;
  stroke: #9b9b9b;
  stroke-width: 1.5;
}

.speed {
  width: 66px;
  height: 30px;
  justify-content: center;
  border: 1px solid #777;
  border-radius: 15px;
}

.box {
  position: relative;
}

.box::after {
  content: "";
  position: absolute;
  top: -5px;
  right: -3px;
  width: 9px;
  height: 9px;
  border-radius: 50%;
  background: #ff4646;
}
```
FILE: script.js
```js
const page = document.getElementById('page');

function text(x, y, value, cls) {
  const t = document.createElementNS('http://www.w3.org/2000/svg', 'text');
  t.setAttribute('x', x);
  t.setAttribute('y', y);
  if (cls) t.setAttribute('class', cls);
  t.textContent = value;
  page.appendChild(t);
}

function wire(d) {
  const p = document.createElementNS('http://www.w3.org/2000/svg', 'path');
  p.setAttribute('d', d);
  p.setAttribute('class', 'wire');
  page.appendChild(p);
}

// row on the pin grid -> y
const row = (top, i) => Math.round(top + i * 11.88);

// pins: [row, number, name]
function leftPins(x, top, pins) {
  pins.forEach(([i, num, name]) => {
    const y = row(top, i);
    wire(`M${x - 24} ${y}H${x}`);
    text(x - 7, y - 2, num, 'end');
    text(x + 2, y + 4, name);
  });
}

function rightPins(x, top, pins) {
  pins.forEach(([i, num, name]) => {
    const y = row(top, i);
    wire(`M${x} ${y}h24`);
    text(x + 6, y - 2, num);
    text(x - 4, y + 4, name, 'end');
  });
}

// U4-A
text(409, 289, 'RTL8306');
text(409, 302, 'U4-A');
wire('M404 314H830V849H404Z');

leftPins(404, 326, [
  [0, 2, 'RXIN[0]'], [1, 3, 'RXIP[0]'], [2, 5, 'TXOP[0]'], [3, 6, 'TXON[0]'],
  [4, 9, 'TXON[1]'], [5, 10, 'TXOP[1]'], [6, 12, 'RXIP[1]'], [7, 13, 'RXIN[1]'],
  [8, 16, 'RXIN[2]'], [9, 17, 'RXIP[2]'], [10, 19, 'TXOP[2]'], [11, 20, 'TXON[2]'],
  [12, 23, 'TXON[3]'], [13, 24, 'TXOP[3]'], [14, 26, 'RXIP[3]'], [15, 27, 'RXIN[3]'],
  [16, 30, 'RXIN[4]'], [17, 31, 'RXIP[4]'], [18, 33, 'TXOP[4]'], [19, 34, 'TXON[4]'],
  [21, 54, 'M(R)TXD[0]/PRXD[0]/LEDMODE[0]'],
  [22, 55, 'M(R)TXD[1]/PRXD[1]/LEDMODE[1]'],
  [23, 56, 'MTXD[2]/PRXD[2]/P4IRTAG[0]'],
  [24, 57, 'MTXD[3]/PRXD[3]/P4IRTAG[1]'],
  [25, 58, 'MCOL/PCOL'],
  [26, 59, 'MRXC/PTXC/REFCLK1'],
  [27, 60, 'MRXDV/PTXEN/CRSDV'],
  [29, 73, 'PHY2PRXD[0]/M(R)2TXD[0]/ENEEPROM'],
  [30, 76, 'PHY2PRXD[1]/M(R)2TXD[1]/GXENFC'],
  [31, 77, 'PHY2PRXD[2]/M2TXD[2]/GYENFC'],
  [32, 78, 'PHY2PRXD[3]/M2TXD[3]/ENBKPRS'],
  [34, 61, 'M(R)RXD[0]/PTXD[0]'],
  [35, 63, 'M(R)RXD[1]/PTXD[1]'],
  [36, 66, 'MRXD[2]/PTXD[2]'],
  [37, 67, 'MRXD[3]/PTXD[3]'],
  [39, 84, 'DISPORTPRI[1]/PHY2PTXD[0]/M(R)2RXD[0]'],
  [40, 85, 'DISPORTPRI[2]/PHY2PTXD[1]/M(R)2RXD[1]'],
  [41, 86, 'DISPORTPRI[3]/PHY2PTXD[2]/M2RXD[2]'],
  [42, 88, 'DISPORTPRI[4]/PHY2PTXD[3]/M2RXD[3]']
]);

rightPins(830, 326, [
  [3, 80, 'PHY2PRXDV'],
  [4, 81, 'PHY2PRXC/M2TRXC/CTRL_REFCLK2'],
  [5, 82, 'PHY2PTXC/M2RXC/REFCLK2'],
  [6, 83, 'DISPORTPRI[0]/PHY2PTXEN/M2RXDV/CRSDV2'],
  [11, 46, 'P4FLCTRL/CPU_INTERRUPT'],
  [12, 47, 'P4SPDSTA'],
  [13, 48, 'P4DUPSTA/HOME_CRS'],
  [14, 49, 'P4LNKSTA'],
  [15, 51, 'MTXC/PRXC/CTRL_REFCLK1'],
  [16, 52, 'M(R)TXEN/PRXDV'],
  [30, 89, 'PHY2PCOL/M2COL/LED_BLNK_TIME'],
  [31, 123, 'VCTL'],
  [32, 127, 'IBREF'],
  [37, 68, 'SEL_MIIMAC/DISDSPRI'],
  [38, 72, 'LDIND/DISLD']
]);

// active-low bars
wire('M741 452H826M773 488H826M712 760H826');

// off-page ports
['RXIN[0]', 'RXIP[0]', 'TXOP[0]', 'TXON[0]', 'TXON[1]', 'TXOP[1]',
  'RXIP[1]', 'RXIN[1]', 'RXIN[2]', 'RXIP[2]', 'TXON[2]', 'TXOP[2]'].forEach((name, i) => {
  const y = row(326, i);
  wire(`M314 ${y - 6}h19l5 6l-5 6h-19zM338 ${y}H380`);
  text(307, y + 4, name, 'end');
});

// VCTRL and bias resistor
wire('M854 694H972M972 688h18l7 6l-7 6h-18z');
text(1001, 700, 'VCTRL');
wire('M854 706H868V730H897l4-7l7 14l7-14l7 14l7-14l7 14l3-7H972M972 718v24M979 723v14M987 728v5');
text(896, 717, 'R16');
text(926, 716, '0.33k');

// U4-C
text(503, 985, 'RTL8306');
text(503, 997, 'U4-C');
wire('M504 1200V1009H753V1200');
leftPins(504, 1021, [
  [0, 36, 'ITEST1'], [1, 37, 'ITEST2'], [2, 38, 'ITEST3'], [3, 41, 'ITEST4'], [4, 65, 'ITEST5']
]);
rightPins(753, 1032, [
  [0, 114, 'LED_SPD[0]/MAX1536'], [1, 109, 'LED_SPD[1]/GXFULL'], [2, 104, 'LED_SPD[2]/GXANEG'],
  [3, 98, 'LED_SPD[3]/DISARP'], [4, 93, 'LED_SPD[4]/DISVLAN']
]);
```
